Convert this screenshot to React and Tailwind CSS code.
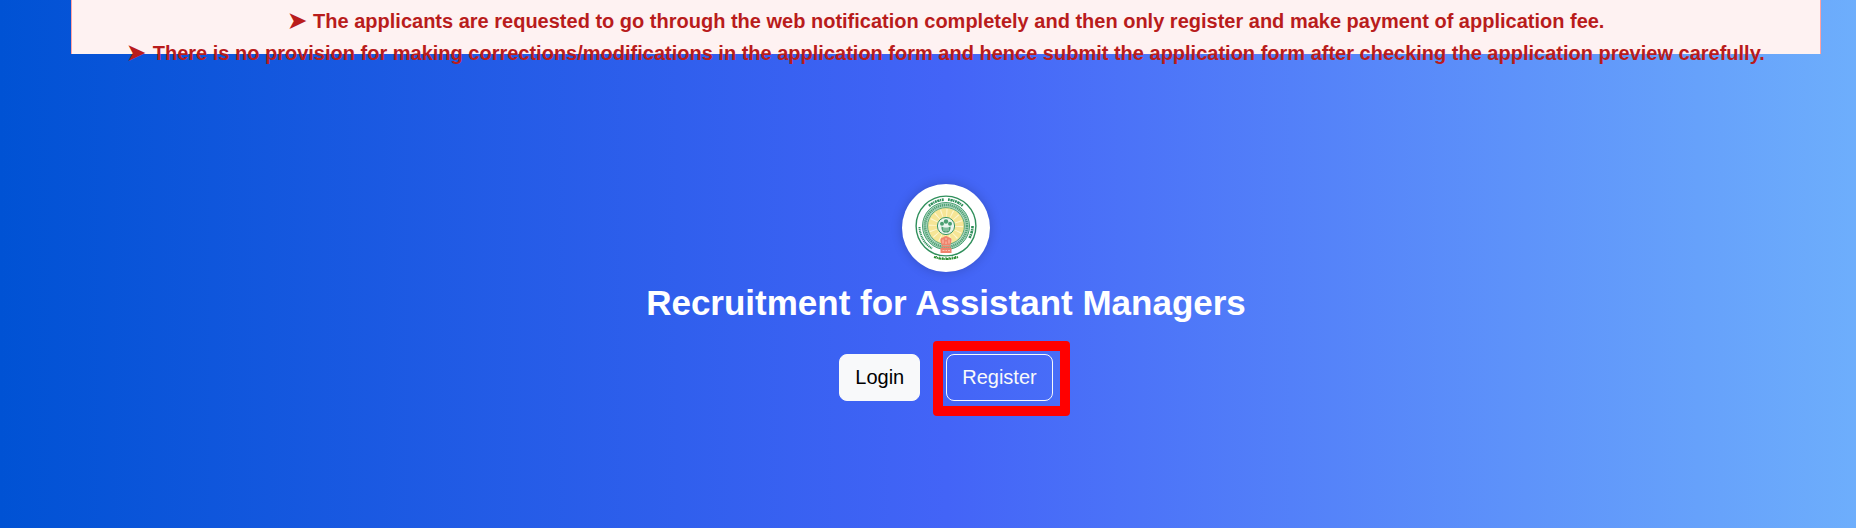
const notices = [
  "The applicants are requested to go through the web notification completely and then only register and make payment of application fee.",
  "There is no provision for making corrections/modifications in the application form and hence submit the application form after checking the application preview carefully.",
];

const Emblem = () => (
  <svg viewBox="0 0 62 66" className="w-[62px] h-[66px]" role="img" aria-label="State emblem">
    {/* outer rim and the lettering band */}
    <circle cx="31" cy="31" r="29.9" fill="#fff" stroke="#2f8f5b" strokeWidth="1.4" />
    <g fill="none" stroke="#2f8f5b" strokeWidth="2.6">
      <path d="M14 11A26.500 26.500 0 0 1 29 4.600M33 4.600A26.500 26.500 0 0 1 48 11" strokeDasharray="1.800 .6 2.400 .5 1.200 .7" />
      <path d="M4.500 32A26.500 26.500 0 0 0 17 53.500" strokeDasharray="1.200 .6" strokeWidth="2" />
      <path d="M57.500 31A26.500 26.500 0 0 1 54.500 43" strokeDasharray="2.400 .8 1.400 .5" />
    </g>
    {/* patterned ring */}
    <circle cx="31" cy="31" r="21" fill="none" stroke="#b5dac6" strokeWidth="5" />
    <circle cx="31" cy="31" r="23.5" fill="none" stroke="#3a9767" strokeWidth="0.9" />
    <circle cx="31" cy="31" r="21" fill="none" stroke="#2f8f5b" strokeWidth="2.6" strokeDasharray="1.3 0.7" strokeOpacity="0.75" />
    {/* rayed disc */}
    <circle cx="31" cy="31" r="18.4" fill="#f6e596" stroke="#4a9f72" strokeWidth="0.9" />
    <circle cx="31" cy="31" r="13" fill="none" stroke="#fdf6cf" strokeWidth="8" strokeDasharray="1 4.1" />
    {/* purna kumbha */}
    <circle cx="31" cy="31" r="8.6" fill="#eaf5ef" stroke="#3a9767" strokeWidth="1" />
    <g fill="#4a9f72">
      <circle cx="31" cy="26.500" r="2.200" />
      <circle cx="27" cy="28.800" r="2" />
      <circle cx="35" cy="28.800" r="2" />
      <path d="M26.500 31.500q4.500 2.500 9 0q.5 4-2.500 6h-4q-3-2-2.500-6z" />
    </g>
    <path d="M29 32.500v3.500M31 33v3.500M33 32.500v3.500" stroke="#eaf5ef" strokeWidth="0.7" />
    {/* lion capital */}
    <path
      d="M28 42.500q3-3 6 0q3 0 2.500 3.500l-1 4h-9l-1-4q-.5-3.500 2.500-3.500zM26.500 50.500h9v2h-9zM25.500 53h11v5h-11z"
      fill="#f0836c"
    />
    <path d="M28 44.500v4M31 43v2M31 46.500v2.500M34 44.500v4M27.500 55.500h2M30.500 55.500h1.500M33 55.500h2" stroke="#fac9bb" strokeWidth="0.9" />
    {/* motto */}
    <path d="M19 62q12 4 24 0" fill="none" stroke="#2f9136" strokeWidth="2" strokeDasharray="2.200 .5 1.200 .5 2.800 .5" />
    <path d="M21 61.200q10 3 20 0" fill="none" stroke="#2f9136" strokeWidth="1.200" strokeDasharray="1 2.200" />
  </svg>
);

const NoticeBanner = () => (
  <div className="h-[54px] mx-[35px] pt-[5px] border-x border-red-300 bg-red-50 text-[#b91c1c] text-xl leading-8 font-bold text-center whitespace-nowrap">
    {notices.map((text) => (
      <p key={text}>
        <span aria-hidden="true" className="mr-0.5 text-[22px] leading-none">➤</span> {text}
      </p>
    ))}
  </div>
);

const Hero = () => (
  <main className="flex flex-col items-center pt-[130px] pb-32 text-center">
    <div className="flex items-center justify-center w-[88px] h-[88px] rounded-full bg-white shadow-[0_0_12px_rgba(0,0,0,0.2)]">
      <Emblem />
    </div>
    <h1 className="mt-2 text-[35px] leading-[46px] font-bold text-white">
      Recruitment for Assistant Managers
    </h1>
    <div className="flex gap-[26px] mt-7 text-xl leading-[30px]">
      <button type="button" className="px-[15px] pt-[7px] pb-2 rounded-lg border border-[#f8f9fa] bg-[#f8f9fa] text-black">
        Login
      </button>
      <div className="relative">
        <button type="button" className="px-[15px] pt-[7px] pb-2 rounded-lg border border-[#f8f9fa] text-[#f8f9fa]">
          Register
        </button>
        <div className="absolute -top-[13px] -bottom-[15px] -left-[13px] -right-[17px] border-10 border-[#ff0000] rounded pointer-events-none" />
      </div>
    </div>
  </main>
);

const App = () => (
  <div className="min-h-screen pl-9 font-['Liberation_Sans',Arial,sans-serif] bg-[linear-gradient(to_right,#0052d4,#4364f7_51%,#6fb1fc_102%)]">
    <NoticeBanner />
    <Hero />
  </div>
);

export default App;
